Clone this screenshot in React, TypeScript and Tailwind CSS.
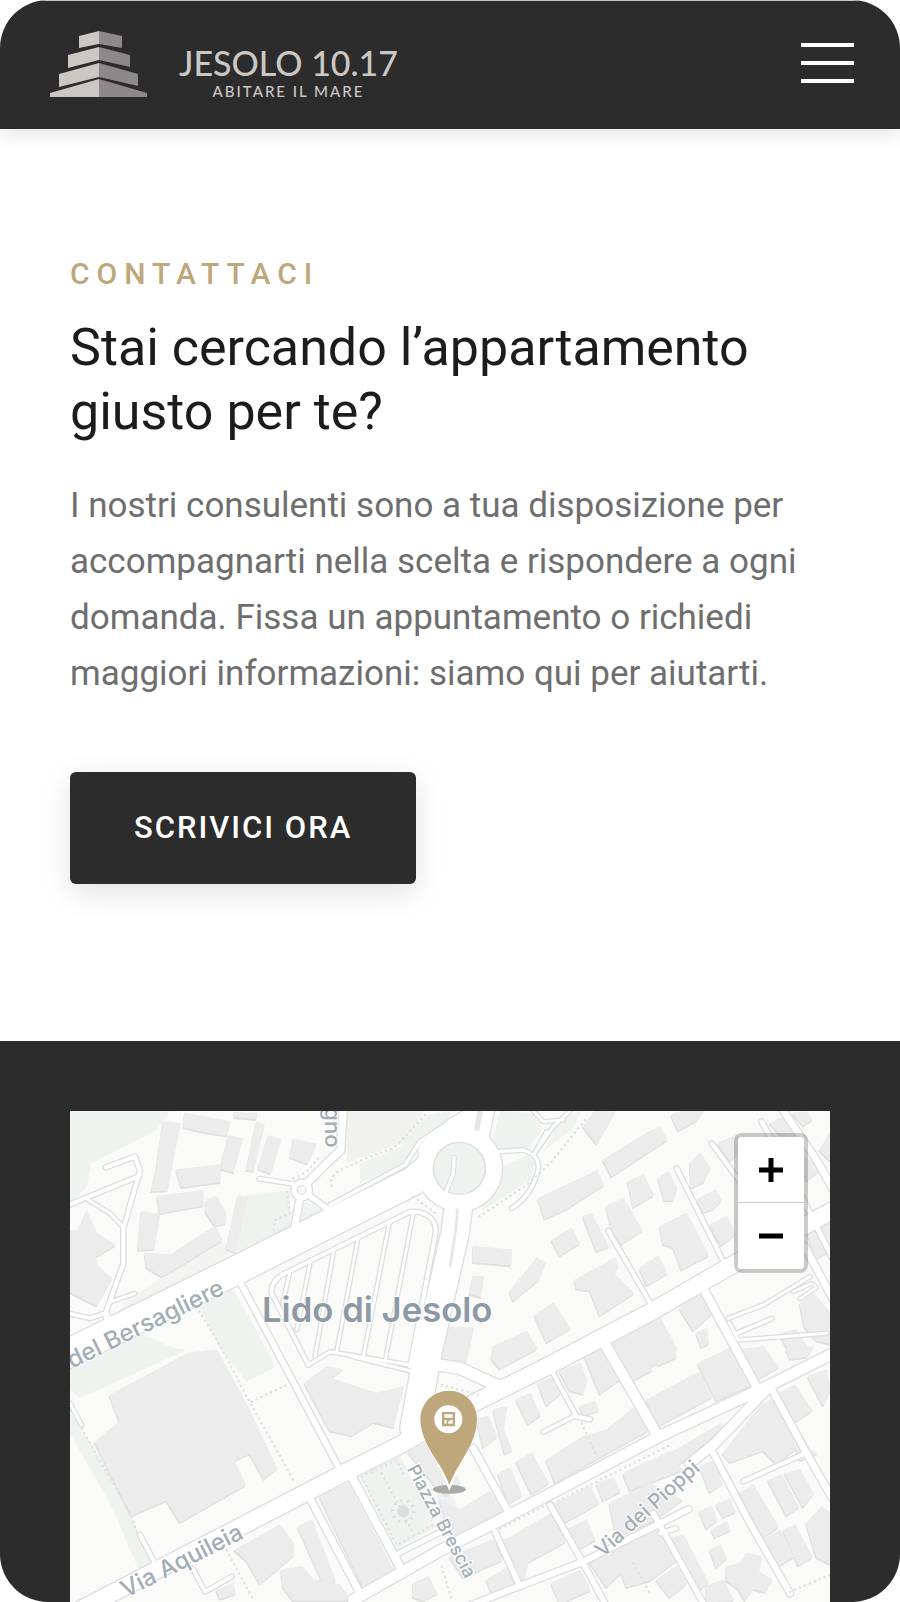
import { useState } from 'react';

type Road = { d: string; w: number };

// streets, drawn twice: grey casing first, white fill on top
const roads: Road[] = [
  { d: 'M0 772L540 505L1060 243L1140 175', w: 84 },
  { d: 'M1100 150L1180 80L1280 20', w: 50 },
  { d: 'M1262 20L1240 130', w: 84 },
  { d: 'M1198 300L1185 400L1105 750L1062 985', w: 82 },
  { d: 'M40 1540L300 1405L850 1120L1020 1035L1250 905L1470 795L1780 632L1990 510L2320 330', w: 50 },
  { d: 'M1105 790L1200 805L1320 860', w: 34 },
  { d: 'M880 1500L1140 1352L1340 1250L1800 1008L2130 855L2320 760', w: 32 },
  { d: 'M1220 1520L1400 1450L1570 1385L1885 1228', w: 18 },
  { d: 'M2130 858L1960 1035L1890 1090', w: 28 },
  { d: 'M1240 1045L1350 1245', w: 20 },
  { d: 'M1625 715L1795 1010', w: 30 },
  { d: 'M1475 812L1550 950L1590 958', w: 12 },
  { d: 'M1450 996L1550 945', w: 10 },
  { d: 'M1935 575L2088 858', w: 24 },
  { d: 'M2130 858L2240 1060L2320 1200', w: 20 },
  { d: 'M1960 1060L2070 1270L2190 1480', w: 18 },
  { d: 'M2050 1144L2235 1060', w: 12 },
  { d: 'M1470 1215L1570 1390L1640 1520', w: 16 },
  { d: 'M1780 1240L1930 1510', w: 16 },
  { d: 'M1305 1295L1380 1460', w: 16 },
  { d: 'M1800 1300L1848 1285', w: 12 },
  { d: 'M1645 392L1770 608', w: 12 },
  { d: 'M1850 205L1990 485', w: 12 },
  { d: 'M1955 130L2020 218L2080 300', w: 12 },
  { d: 'M2105 65L2180 200L2320 480', w: 14 },
  { d: 'M2170 33L2270 180L2320 270', w: 20 },
  { d: 'M2235 440L2320 600', w: 20 },
  { d: 'M2005 655L2110 615L2250 530', w: 9 },
  { d: 'M2008 668L2035 720L2300 700', w: 9 },
  { d: 'M2030 700L2135 656', w: 11 },
  { d: 'M2200 575L2255 550L2270 562L2220 596', w: 7 },
  { d: 'M540 545L840 1110', w: 17 },
  { d: 'M750 1195L905 1490', w: 20 },
  { d: 'M878 1135L1030 1420', w: 24 },
  { d: 'M1015 1360L1170 1282', w: 14 },
  { d: 'M240 1305L285 1390', w: 12 },
  { d: 'M30 910L65 975', w: 9 },
  { d: 'M398 1405L435 1475L515 1430', w: 11 },
  // car park
  { d: 'M745 795L635 580Q630 550 665 525L1030 345Q1060 325 1100 345Q1135 365 1125 410L1050 800', w: 11 },
  { d: 'M745 795L810 755L1050 795', w: 9 },
  { d: 'M690 515L668 610', w: 8 },
  { d: 'M752 480L710 690', w: 8 },
  { d: 'M822 448L765 770', w: 8 },
  { d: 'M895 410L830 755', w: 8 },
  { d: 'M988 368L910 770', w: 8 },
  { d: 'M1060 338L975 785', w: 8 },
  { d: 'M870 768L1060 815', w: 9 },
  // footpaths on the left
  { d: 'M137 202L225 170L240 212L190 385L190 490L135 645', w: 12 },
  { d: 'M25 315L238 228', w: 12 },
  { d: 'M85 300L150 340L190 382', w: 9 },
  { d: 'M148 607L225 580', w: 9 },
  { d: 'M25 640L90 655L135 640', w: 11 },
  { d: 'M140 645L145 670', w: 18 },
  // small roundabout
  { d: 'M598 236L700 252', w: 10 },
  { d: 'M742 248L800 190L842 150L850 20', w: 22 },
  { d: 'M722 285L702 390', w: 20 },
  { d: 'M745 285L800 325', w: 16 },
  { d: 'M810 315L1035 195L1080 125L1170 65L1300 20', w: 10 },
  // paths beside the big roundabout
  { d: 'M1310 155L1390 150Q1450 170 1430 225Q1410 290 1355 325', w: 10 },
  { d: 'M1430 150L1480 80L1530 33', w: 9 },
  { d: 'M1425 160L1460 95', w: 9 },
  { d: 'M1420 33L1450 65L1510 60', w: 8 },
];

const greens: string[] = [
  '30,33 330,33 290,90 95,190 80,260 30,310',
  '560,285 690,270 690,385 520,462',
  '900,190 1020,140 1095,45 1170,33 1170,60 1080,120 1030,190 900,250',
  '720,310 740,305 785,330 712,372',
  '1320,33 1440,40 1445,90 1400,150 1310,150 1300,110',
  '1330,200 1400,165 1425,190 1410,240 1270,330 1255,310',
  '1500,60 1560,33 1545,80 1480,130 1455,150',
  '420,622 520,565 640,785 640,805 560,845 480,745',
  '30,810 240,700 330,740 380,750 60,895 30,870',
  '30,910 60,985 100,1040 210,1240 275,1390 235,1405 150,1210 30,1000',
  '900,1128 1020,1068 1130,1280 1010,1345',
  '1130,1170 1180,1190 1200,1250 1330,1180 1330,1240 1180,1320 1140,1290',
];

const buildings: string[] = [
  // north west block
  '310,65 360,72 332,210 322,270 275,272 290,205',
  '375,40 510,65 500,105 432,95 372,80',
  '505,108 547,115 520,215 482,205',
  '590,66 612,75 580,212 560,208',
  '625,108 662,118 632,218 595,205',
  '700,118 768,132 742,190 692,170',
  '523,38 592,40 588,56 525,50',
  '350,210 480,195 480,245 365,260',
  '292,290 428,272 430,315 300,338',
  '440,300 470,290 498,340 495,370 465,375 438,335',
  '535,288 562,292 525,455 500,445',
  '245,335 298,345 282,445 235,448',
  '255,460 330,465 465,380 485,420 330,515 305,528 260,500',
  '30,395 55,390 80,335 110,400 165,435 105,470 115,500 155,535 110,615 30,575',
  // east of the roundabout
  '1570,78 1605,33 1665,33 1610,130',
  '1835,45 1870,33 1930,33 1910,60 1855,90',
  '1630,180 1760,100 1800,80 1820,120 1750,165 1655,228',
  '1435,295 1585,225 1610,212 1630,255 1520,325 1455,355',
  '1705,245 1750,225 1780,285 1720,320',
  '1795,235 1825,215 1850,265 1840,300 1815,300',
  '1890,190 1920,160 1950,205 1930,245 1895,262',
  '1910,300 1965,270 1985,300 1960,325 1930,335',
  '1640,320 1690,295 1745,390 1685,430 1660,405',
  '1570,350 1595,342 1645,440 1610,452',
  '1475,420 1535,385 1558,430 1500,465',
  '1240,440 1355,450 1352,495 1240,485',
  '1430,475 1455,490 1435,540 1360,600 1350,575',
  '1545,540 1665,475 1675,500 1660,520 1720,580 1620,645 1590,570 1550,565',
  '1740,505 1795,468 1820,520 1760,555',
  '1800,380 1880,340 1945,465 1865,508 1840,440 1810,430',
  '1950,375 2000,350 2025,400 1985,435',
  '1975,130 2030,105 2045,150 2010,180',
  '2130,70 2180,45 2215,95 2180,120',
  '2200,40 2240,35 2255,60 2230,75',
  '2240,390 2290,355 2310,370 2310,450 2270,475',
  '2215,160 2285,205 2240,240',
  '2280,150 2310,100 2310,180',
  '1425,645 1480,610 1530,685 1460,725',
  '1240,530 1270,530 1262,590 1230,580',
  '1165,680 1240,685 1215,800 1140,790',
  '1300,740 1400,695 1430,745 1320,805 1295,775',
  '1655,715 1800,655 1850,745 1780,795 1720,820',
  '1860,625 1920,580 1955,640 1900,690',
  '1910,700 1940,685 1945,730 1925,740',
  '2220,610 2260,580 2310,640 2310,730 2270,720 2235,680',
  '2160,700 2210,690 2240,740 2190,760',
  // west block, large shed and rocks
  '150,885 385,760 470,750 560,915 650,1105 612,1135 570,1060 522,1080 555,1155 360,1265 320,1200 215,1245 105,1025 180,965',
  '735,850 800,800 845,810 810,835 950,880 1030,860 1000,980 940,965 875,1005 810,990',
  '525,1350 660,1275 700,1330 700,1365 655,1405 600,1450 560,1380',
  '715,1280 755,1260 825,1440 795,1460',
  '665,1410 725,1400 760,1440 840,1455 870,1500 700,1500 670,1460',
  '780,1190 865,1150 1005,1420 915,1470',
  '1060,1450 1105,1430 1130,1480 1090,1500 1060,1490',
  '470,1470 520,1450 525,1480 480,1495',
  // south east blocks
  '1045,1055 1130,1015 1200,1150 1160,1185 1130,1160',
  '1140,1200 1200,1230 1290,1175 1335,1250 1180,1320',
  '1250,955 1285,950 1310,1010 1270,1040',
  '1300,930 1340,920 1330,990 1355,1050 1335,1060',
  '1370,900 1410,880 1440,945 1405,970',
  '1435,850 1480,830 1500,880 1460,915',
  '1500,815 1560,790 1580,840 1570,880 1530,870',
  '1575,770 1640,740 1690,830 1620,880',
  '1650,740 1740,750 1775,810 1720,840',
  '1770,750 1840,740 1850,770 1795,795',
  '1560,920 1605,905 1615,930 1570,945',
  '1370,1085 1415,1060 1465,1150 1415,1180',
  '1315,1120 1350,1105 1385,1185 1345,1210',
  '1460,1080 1570,1010 1640,990 1720,925 1765,990 1485,1145',
  '1760,900 1920,815 1955,890 1790,980',
  '1915,790 2010,745 2080,850 1970,900',
  '2040,750 2110,740 2155,800 2095,835',
  '2180,750 2260,740 2240,770 2190,775',
  '2160,880 2205,855 2255,930 2205,965',
  '2245,830 2300,810 2310,870 2290,915',
  '1830,1060 1985,970 1990,985 1925,1050 1850,1095',
  '1990,1060 2100,920 2135,900 2215,1040 2150,1090 2110,1050 2010,1085',
  '2200,1020 2220,1080 2270,1060',
  '1920,1100 1965,1080 1985,1150 1950,1175',
  '1610,1150 1660,1135 1680,1175 1630,1200',
  '1480,1215 1590,1160 1615,1210 1515,1265',
  '1520,1290 1580,1260 1605,1320 1550,1350',
  '1690,1120 1830,1055 1865,1110 1710,1170',
  '1650,1210 1770,1150 1865,1200 1780,1260 1670,1310',
  '1310,1335 1475,1240 1515,1325 1405,1385 1390,1440 1370,1435',
  '1170,1370 1300,1320 1325,1380 1210,1430',
  '1280,1440 1350,1400 1370,1460 1300,1485',
  '1475,1450 1560,1410 1590,1470 1500,1510',
  '1590,1385 1650,1350 1690,1410 1640,1460',
  '1660,1350 1790,1290 1850,1380 1770,1440 1700,1460',
  '1790,1440 1850,1400 1880,1450 1830,1490',
  '1835,1315 1870,1305 1945,1450 1905,1475',
  '1920,1235 1955,1220 1970,1260 1940,1285',
  '1970,1215 2010,1195 2025,1235 1990,1250',
  '1955,1290 2000,1265 2010,1290 1965,1310',
  '1950,1350 1980,1335 2000,1375 1970,1400',
  '2000,1400 2040,1390 2060,1360 2105,1370 2095,1415 2135,1440 2115,1475 2080,1465 2055,1500 2035,1465 2000,1440',
  '2040,1180 2080,1155 2155,1280 2110,1310',
  '2125,1140 2165,1125 2215,1220 2180,1245',
  '2175,1120 2220,1110 2260,1180 2230,1220',
  '2110,1320 2160,1290 2200,1370 2150,1400',
  '2170,1290 2205,1275 2255,1370 2215,1395',
  '2240,1270 2285,1220 2310,1240 2310,1390 2270,1370',
  '1940,1460 1990,1440 2020,1500 1940,1506',
];

const dots: string[] = [
  'M1095 45L1040 105L1000 145L930 170L840 210Q800 235 820 270',
  'M690 380L640 400L645 360L690 340L680 270',
  'M700 235L740 215L775 175',
  'M1575 60L1470 190L1400 255L1250 355',
  'M410 620L485 745L560 890L650 1050L705 1150',
  'M575 905L690 850',
  'M65 985L210 1240L235 1310',
  'M500 1350L580 1500',
  'M905 1130L1010 1335L1120 1275',
  'M920 1122L1010 1080L1035 1130',
  'M965 1120L1060 1300',
  'M1480 1210L1830 1035',
  'M1320 1285L1460 1215',
  'M1145 855L1260 885',
  'M1565 970L1610 1070',
  'M2190 1475L2310 1425',
  'M1145 1400L1175 1500',
  'M1720 1390L1770 1480',
  'M1060 290L1135 345',
];

function MapArt() {
  return (
    <svg viewBox="30 33 2280 1473" className="block h-auto w-full" role="img" aria-label="Lido di Jesolo">
      <rect x="0" y="0" width="2400" height="1600" fill="#fafaf8" />
      <polygon points="860,33 1095,33 1030,130 860,190" fill="#f1f1ef" />
      <polygon points="165,655 530,455 480,425 330,520 200,600" fill="#f3f3f2" />
      {greens.map((p) => (
        <polygon key={p} points={p} fill="#eff3f0" />
      ))}
      {/* soft shadow below every building */}
      <g fill="#dfdfdf" stroke="#dfdfdf" strokeWidth="4" strokeLinejoin="round" transform="translate(-2 5)">
        {buildings.map((p) => (
          <polygon key={p} points={p} />
        ))}
      </g>
      <g fill="#ececec" stroke="#ececec" strokeWidth="4" strokeLinejoin="round">
        {buildings.map((p) => (
          <polygon key={p} points={p} />
        ))}
      </g>
      <g fill="none" stroke="#dcdee0" strokeLinecap="round" strokeLinejoin="round">
        {roads.map((r) => (
          <path key={r.d} d={r.d} strokeWidth={r.w + 8} />
        ))}
        <circle cx="1198" cy="205" r="104" strokeWidth="56" />
        <circle cx="725" cy="270" r="22" strokeWidth="26" />
      </g>
      <g fill="none" stroke="#ffffff" strokeLinecap="round" strokeLinejoin="round">
        {roads.map((r) => (
          <path key={r.d} d={r.d} strokeWidth={r.w} />
        ))}
        <circle cx="1198" cy="205" r="104" strokeWidth="48" />
        <circle cx="725" cy="270" r="22" strokeWidth="18" />
      </g>
      <circle cx="725" cy="270" r="13" fill="#fafaf8" stroke="#dcdee0" strokeWidth="4" />
      <circle cx="1198" cy="205" r="78" fill="#eff3f0" stroke="#dcdee0" strokeWidth="4" />
      <path d="M1182 172L1180 220L1160 270" fill="none" stroke="#dcdee0" strokeWidth="16" strokeLinecap="round" />
      <path d="M1182 172L1180 220L1158 276" fill="none" stroke="#ffffff" strokeWidth="10" strokeLinecap="round" />
      <path d="M1260 33L1250 92" stroke="#e6e6e6" strokeWidth="16" />
      <path d="M1193 325L1186 400L1170 500" fill="none" stroke="#e6e6e6" strokeWidth="8" />
      <g fill="none" stroke="#dde1e2" strokeWidth="7" strokeLinecap="round" strokeDasharray="1 15">
        {dots.map((d) => (
          <path key={d} d={d} />
        ))}
      </g>
      <circle cx="1030" cy="1234" r="18" fill="#d8dfdf" />
      <circle cx="1030" cy="1234" r="32" fill="none" stroke="#d8dfdf" strokeWidth="10" strokeDasharray="6 14" />

      {/* street and place names */}
      <g className="font-[Inter,sans-serif] font-medium" fill="#a3adb5" stroke="#ffffff" strokeWidth="6" paintOrder="stroke">
        <text x="606" y="666" fontSize="104" fill="#8d99a5" className="font-semibold">Lido di Jesolo</text>
        <text fontSize="72" transform="translate(36 806) rotate(-26)">del Bersagliere</text>
        <text fontSize="71" transform="translate(198 1494) rotate(-27)">Via Aquileia</text>
        <text fontSize="61" transform="translate(1628 1374) rotate(-42)">Via dei Pioppi</text>
        <text fontSize="54" transform="translate(1040 1106) rotate(62)">Piazza Brescia</text>
        <text fontSize="66" transform="translate(794 22) rotate(90)">gno</text>
      </g>

      {/* marker */}
      <ellipse cx="1168" cy="1168" rx="50" ry="13" fill="#a9a9a7" />
      <path
        d="M1167 872C1119 872 1081 910 1081 958C1081 1008 1112 1056 1136 1101C1149 1126 1158 1147 1168 1174C1178 1147 1187 1126 1200 1101C1222 1056 1251 1008 1251 958C1251 910 1215 872 1167 872Z"
        fill="#ffffff"
      />
      <path
        d="M1167 872C1119 872 1081 910 1081 958C1081 1008 1112 1056 1136 1091C1149 1112 1158 1130 1168 1154C1178 1130 1187 1112 1200 1091C1222 1056 1251 1008 1251 958C1251 910 1215 872 1167 872Z"
        fill="#bda77b"
      />
      <circle cx="1165" cy="958" r="42" fill="#ffffff" />
      <path
        fillRule="evenodd"
        fill="#bda77b"
        d="M1146 936H1185V979H1146ZM1153 943V953H1178V943ZM1153 960V971H1160V960ZM1165 964V971H1178V960H1169V964Z"
      />
    </svg>
  );
}

function Logo() {
  return (
    <a href="#" aria-label="Jesolo 10.17" className="flex text-[#cbc8c4]">
      <svg viewBox="0 0 97 66" className="mt-0.5 h-[66px] w-[97px] shrink-0">
        <g fill="#cbc8c4">
          <path d="M29 5L49 0V13L29 17Z" />
          <path d="M18 24L49 16V29L18 37Z" />
          <path d="M9 43L49 32V46L9 56Z" />
          <path d="M0 62L49 48V66H0Z" />
        </g>
        <g fill="#8d898a">
          <path d="M49 0L72 5V17L49 13Z" />
          <path d="M49 16L80 24V36L49 29Z" />
          <path d="M49 32L88 43V55L49 46Z" />
          <path d="M49 48L97 62V66H49Z" />
        </g>
      </svg>
      <span className="ml-8 flex flex-col items-center pt-4 font-[Lato,sans-serif]">
        <span className="text-[34px] leading-9 font-medium">JESOLO 10.17</span>
        <span className="text-[15px] leading-5 font-medium tracking-[2px]">ABITARE IL MARE</span>
      </span>
    </a>
  );
}

export default function App() {
  const [open, setOpen] = useState(false);

  return (
    <div className="overflow-hidden rounded-[48px] bg-white font-[Roboto,sans-serif]">
      <header className="relative flex items-start justify-between border-t border-[#c5cac8] bg-[#2c2c2c] py-7 pr-[46px] pl-[50px] shadow-[0_4px_20px_rgba(0,0,0,0.12)]">
        <Logo />
        <button
          type="button"
          aria-label="Menu"
          aria-expanded={open}
          onClick={() => setOpen(!open)}
          className="mt-3.5 flex w-[53px] flex-col gap-[14px]"
        >
          <span className="h-1 w-full bg-white" />
          <span className="h-1 w-full bg-white" />
          <span className="h-1 w-full bg-white" />
        </button>
      </header>

      {/* contatti */}
      <section className="px-[70px] pt-[129px] pb-[157px]">
        <p className="text-[30px] leading-8 font-medium tracking-[7px] text-[#bda77b]">CONTATTACI</p>
        <h1 className="mt-[26px] text-[52px] leading-[64px] text-[#1c1c1c]">Stai cercando l’appartamento giusto per te?</h1>
        <p className="mt-[34px] text-[35px] leading-[56px] text-[#6e6e6e]">
          I nostri consulenti sono a tua disposizione per accompagnarti nella scelta e rispondere a ogni domanda. Fissa
          un appuntamento o richiedi maggiori informazioni: siamo qui per aiutarti.
        </p>
        <button
          type="button"
          className="mt-[70px] rounded-md bg-[#2c2c2c] px-16 py-9 text-[31px] leading-10 font-medium tracking-[2px] text-white shadow-[0_8px_30px_rgba(0,0,0,0.12)]"
        >
          SCRIVICI ORA
        </button>
      </section>

      {/* mappa */}
      <section className="bg-[#2c2c2c] px-[70px] pt-[70px]">
        <div className="relative">
          <MapArt />
          <div className="absolute top-[22px] right-[22px] flex w-[74px] flex-col overflow-hidden rounded-lg border-4 border-black/20 bg-clip-padding">
            <button type="button" aria-label="Zoom in" className="flex h-[66px] items-center justify-center border-b border-[#cccccc] bg-white">
              <svg viewBox="0 0 24 24" className="size-6">
                <path d="M12 0V24M0 12H24" stroke="#000000" strokeWidth="5" />
              </svg>
            </button>
            <button type="button" aria-label="Zoom out" className="flex h-[66px] items-center justify-center bg-white">
              <svg viewBox="0 0 24 24" className="size-6">
                <path d="M0 12H24" stroke="#000000" strokeWidth="5" />
              </svg>
            </button>
          </div>
        </div>
      </section>
    </div>
  );
}
